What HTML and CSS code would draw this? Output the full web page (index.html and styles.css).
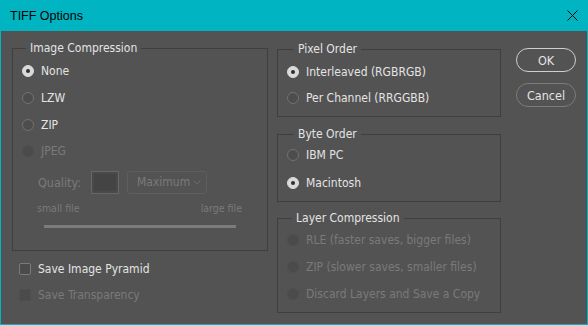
FILE: index.html
```html
<!DOCTYPE html>
<html lang="en">
<head>
  <meta charset="UTF-8">
  <title>TIFF Options</title>
  <link rel="stylesheet" href="styles.css">
</head>
<body>
<div class="window">
  <div class="titlebar">
    <span class="title">TIFF Options</span>
    <svg class="close" width="11" height="11" viewBox="0 0 11 11">
      <path d="M0.5 0.5 L10.5 10.5 M10.5 0.5 L0.5 10.5" stroke="#000" stroke-width="1" fill="none"/>
    </svg>
  </div>

  <div class="content">
    <div class="col-left">
      <fieldset class="group group-image">
        <legend>Image Compression</legend>
        <div class="opt"><span class="radio on"></span>None</div>
        <div class="opt"><span class="radio"></span>LZW</div>
        <div class="opt"><span class="radio"></span>ZIP</div>
        <div class="opt off"><span class="radio"></span>JPEG</div>
        <div class="quality">
          <span class="q-label">Quality:</span>
          <span class="swatch"></span>
          <span class="select">Maximum
            <svg width="8" height="5" viewBox="0 0 8 5"><path d="M0.5 0.5 L4 4 L7.5 0.5" stroke="#6b6b6b" fill="none"/></svg>
          </span>
        </div>
        <div class="scale"><span>small file</span><span>large file</span></div>
        <div class="track"></div>
      </fieldset>
      <div class="check-row"><span class="check"></span>Save Image Pyramid</div>
      <div class="check-row off"><span class="check"></span>Save Transparency</div>
    </div>

    <div class="col-mid">
      <fieldset class="group group-pixel">
        <legend>Pixel Order</legend>
        <div class="opt"><span class="radio on"></span>Interleaved (RGBRGB)</div>
        <div class="opt"><span class="radio"></span>Per Channel (RRGGBB)</div>
      </fieldset>
      <fieldset class="group group-byte">
        <legend>Byte Order</legend>
        <div class="opt"><span class="radio"></span>IBM PC</div>
        <div class="opt"><span class="radio on"></span>Macintosh</div>
      </fieldset>
      <fieldset class="group group-layer">
        <legend>Layer Compression</legend>
        <div class="opt off"><span class="radio"></span>RLE (faster saves, bigger files)</div>
        <div class="opt off"><span class="radio"></span>ZIP (slower saves, smaller files)</div>
        <div class="opt off"><span class="radio"></span>Discard Layers and Save a Copy</div>
      </fieldset>
    </div>

    <div class="col-buttons">
      <button class="btn btn-default">OK</button>
      <button class="btn">Cancel</button>
    </div>
  </div>
</div>
</body>
</html>
```

FILE: styles.css
```css
body { margin: 0; font-family: "DejaVu Sans Condensed", "Liberation Sans", Arial, sans-serif; font-size: 12px; }

.window { width: 588px; height: 325px; box-sizing: border-box; background: #535353; border: 1px solid #00b4c2; border-top: none; display: flex; flex-direction: column; }

.titlebar { height: 31px; margin: 0 -1px; background: #00b4c2; display: flex; align-items: center; justify-content: space-between; padding: 0 10px; }
.title { font-family: "Liberation Sans", Arial, sans-serif; font-size: 12.5px; color: #000; }

.content { display: flex; padding-left: 11px; color: #e4e4e4; }

.group { margin: 0; border: 1px solid #3f3f3f; min-width: 0; box-sizing: border-box; }
.group legend { line-height: 16px; padding: 0 4px; color: #e4e4e4; }

.col-left { width: 256px; padding-top: 9px; }
.group-image { padding: 2px 0 22px 9px; }
.group-image legend { margin-left: 4px; }

.opt { height: 26px; display: flex; align-items: center; gap: 7px; }
.group-image .opt { height: 26.7px; }
.opt.off { color: #7a7a7a; }

.radio { width: 12px; height: 12px; box-sizing: border-box; border-radius: 50%; border: 1px solid #727272; background: #4d4d4d; position: relative; }
.radio.on { background: #dadada; border-color: #dadada; }
.radio.on::after { content: ""; position: absolute; left: 3px; top: 3px; width: 4px; height: 4px; border-radius: 50%; background: #2f2f2f; }
.off .radio { border-color: #4e4e4e; background: #4b4b4b; }

.quality { display: flex; align-items: center; margin-top: 6px; padding-left: 16px; color: #7a7a7a; height: 23px; font-size: 12.5px; }
.q-label { width: 53px; }
.swatch { width: 28px; height: 23px; box-sizing: border-box; border: 1px solid #666; outline: 2px solid #4a4a4a; outline-offset: -3px; background: #444; margin-right: 8px; }
.select { width: 80px; height: 23px; box-sizing: border-box; border: 1px solid #5e5e5e; border-radius: 3px; display: flex; align-items: center; justify-content: space-between; padding: 0 5px 0 9px; font-size: 12px; }

.scale { display: flex; justify-content: space-between; margin-top: 7px; padding: 0 25px 0 15px; font-size: 10.5px; line-height: 14px; color: #7a7a7a; }
.track { height: 3px; background: #7c7c7c; margin: 10px 31px 0 22px; }

.check-row { height: 26px; display: flex; align-items: center; gap: 7px; padding-left: 7px; }
.check-row:first-of-type { margin-top: 5px; }
.check-row.off { color: #7a7a7a; }
.check { width: 12px; height: 12px; box-sizing: border-box; border: 1px solid #7a7a7a; border-radius: 2px; background: #4b4b4b; }
.off .check { border-color: #4e4e4e; }

.col-mid { width: 224px; margin-left: 9px; padding-top: 10px; display: flex; flex-direction: column; }
.group-pixel { padding: 2px 0 5px 9px; }
.group-pixel legend, .group-byte legend { margin-left: 7px; }
.group-byte { margin-top: 9px; padding: 0 0 5px 9px; }
.group-byte .opt + .opt { margin-top: 2px; }
.group-layer { margin-top: 8px; padding: 0 0 5px 9px; }
.group-layer .opt { height: 27px; }
.group-layer legend { margin-left: 5px; }

.col-buttons { margin-left: 15px; padding-top: 17px; display: flex; flex-direction: column; gap: 11px; }
.btn { width: 60px; height: 24px; border-radius: 12px; border: 1px solid #7c7c7c; background: #535353; color: #e4e4e4; font-family: inherit; font-size: 12.5px; padding: 0; }
.btn-default { border-color: #cfcfcf; }
```
